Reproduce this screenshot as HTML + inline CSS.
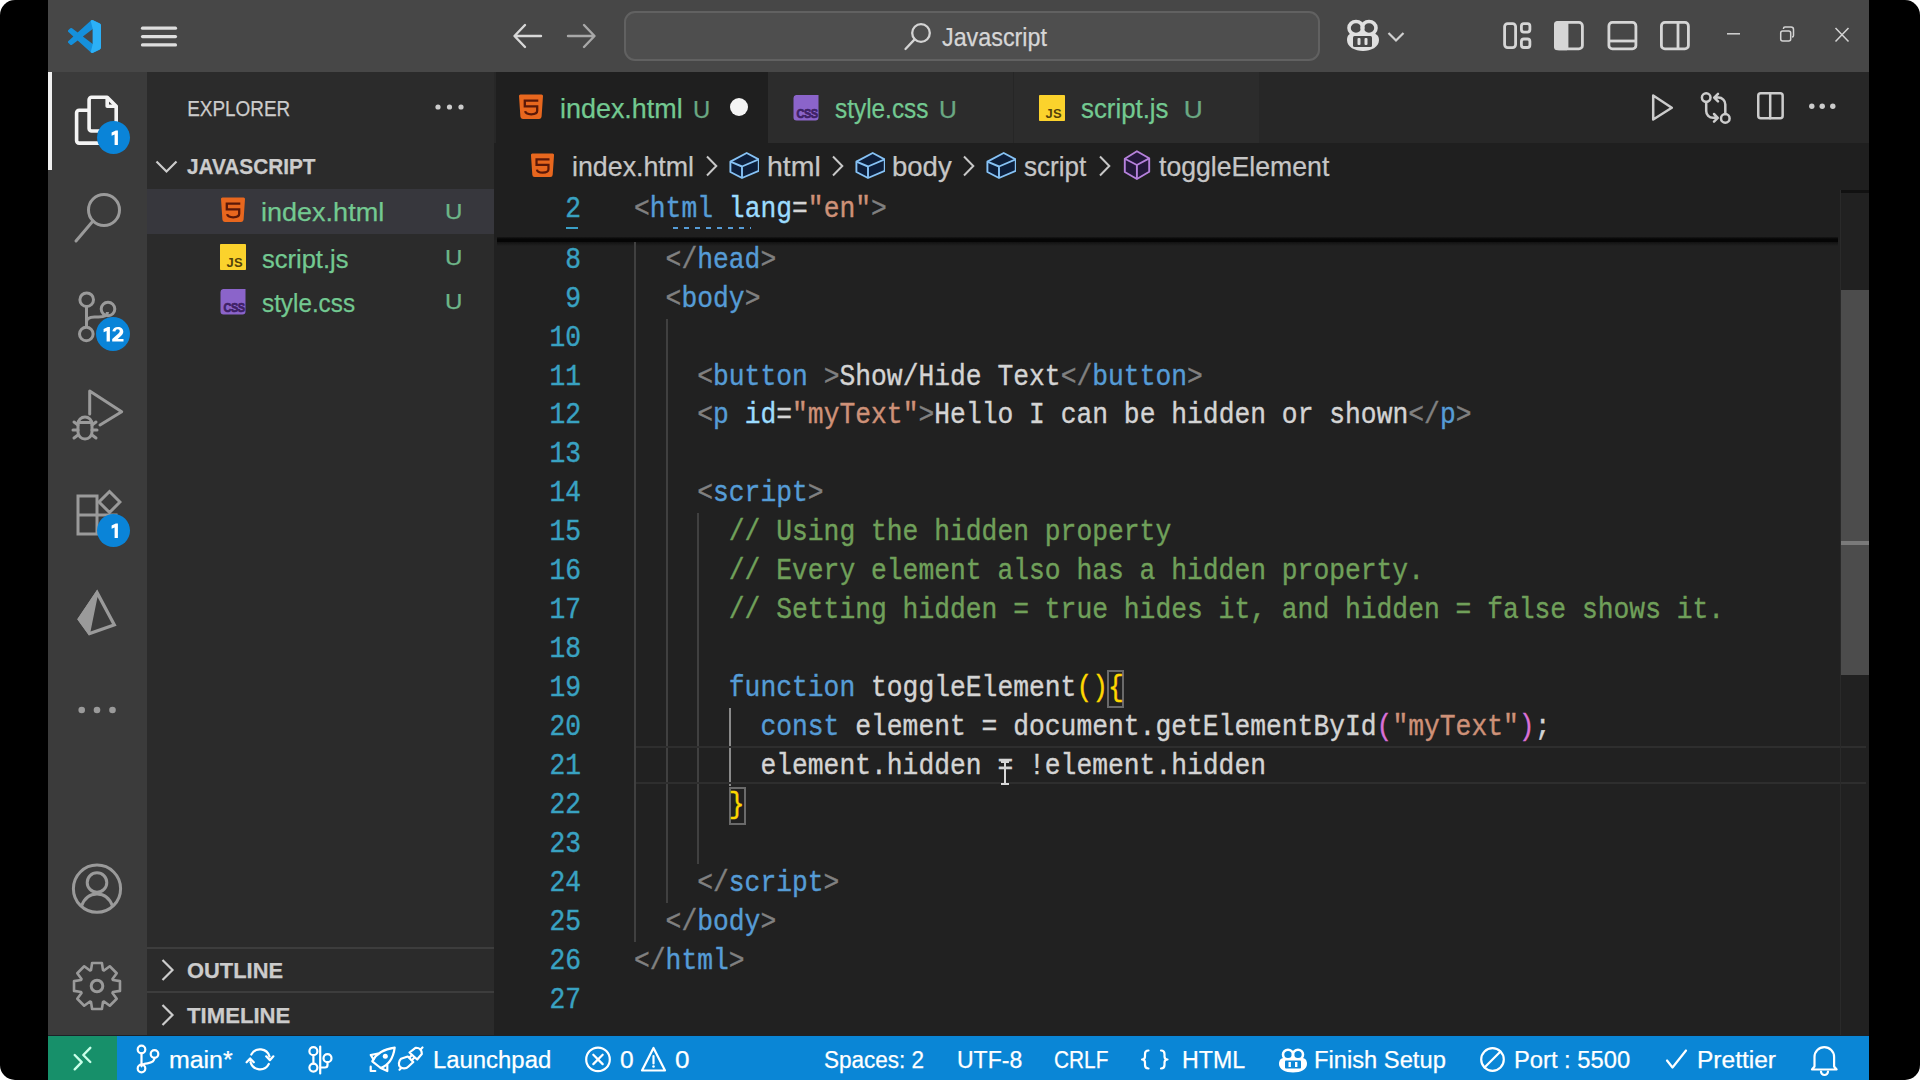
<!DOCTYPE html>
<html><head><meta charset="utf-8">
<style>
*{box-sizing:border-box;margin:0;padding:0}
html,body{width:1920px;height:1080px;overflow:hidden;background:#fff}
body{position:relative;font-family:"Liberation Sans",sans-serif}
.a{position:absolute}
#frame{left:0;top:0;width:1920px;height:1080px;background:#000;border-radius:15px}
#title{left:48px;top:0;width:1821px;height:72px;background:#474747}
#act{left:48px;top:72px;width:99px;height:963px;background:#3b3b3b}
#side{left:147px;top:72px;width:347px;height:963px;background:#2b2b2b}
#editor{left:494px;top:72px;width:1375px;height:963px;background:#212121}
#tabbar{left:494px;top:72px;width:1375px;height:71px;background:#272727}
#status{left:48px;top:1036px;width:1821px;height:44px;background:#0a86d6}
#remote{left:48px;top:1036px;width:69px;height:44px;background:#17906a}
.code{font-family:"Liberation Mono",monospace;font-size:26.33px;white-space:pre;line-height:39px;height:39px;transform:translateY(1.1px) scaleY(1.1);transform-origin:0 26.5px;-webkit-text-stroke:0.35px currentColor}
.ln{left:500px;width:81px;text-align:right;color:#39a2c2}
.cl{left:634px;color:#d4d4d4}
.p{color:#808080}.t{color:#569cd6}.at{color:#9cdcfe}.s{color:#ce9178}.c{color:#70a05a}.k{color:#569cd6}.y{color:#ffd700}.m{color:#da70d6}.f{color:#d4d4d4}
.ui{font-family:"Liberation Sans",sans-serif;white-space:nowrap}
.guide{width:2px;background:#404040}
.tx{font-family:"Liberation Sans",sans-serif;white-space:pre;-webkit-text-stroke:0.25px currentColor}
</style></head><body>

<svg width="0" height="0" style="position:absolute">
<defs>
<symbol id="i-html" viewBox="0 0 26 26"><path fill="#e8671e" d="M2.5 0.5H23.5a1.5 1.5 0 0 1 1.5 1.6L23.6 22.6a2.5 2.5 0 0 1-2.4 2.4H4.8a2.5 2.5 0 0 1-2.4-2.4L1 2.1A1.5 1.5 0 0 1 2.5 0.5z"/><path fill="none" stroke="#5a1808" stroke-width="2.3" stroke-linejoin="miter" d="M20.3 6.6H6.8V12.3H19.2V16.8C19.2 19.3 16.5 20.3 13.2 20.3C10 20.3 7.5 19.5 7.2 17.2"/></symbol>
<symbol id="i-js" viewBox="0 0 26 26"><rect x="0" y="0" width="26" height="26" rx="0.8" fill="#fbd22c"/><text x="23" y="22.6" text-anchor="end" font-family="Liberation Sans" font-weight="bold" font-size="13" letter-spacing="0.3" fill="#54420a">JS</text></symbol>
<symbol id="i-css" viewBox="0 0 26 26"><path fill="#8b64ca" d="M3 0H25.5V22.5a3 3 0 0 1-3 3H3.5a3 3 0 0 1-3-3V3a3 3 0 0 1 2.5-3z"/><text x="14" y="19.3" text-anchor="middle" font-family="Liberation Sans" font-weight="bold" font-size="11" fill="#3e2166" stroke="#3e2166" stroke-width="0.6" transform="scale(1,1.2)" letter-spacing="-0.6">CSS</text></symbol>
<symbol id="i-box" viewBox="0 0 30 28"><path fill="#0d1e3a" stroke="#86c2f5" stroke-width="1.9" stroke-linejoin="round" d="M1.4 9.7L17.7 1L29.75 7.4V18.8L13 26L1.4 20z"/><path fill="none" stroke="#86c2f5" stroke-width="1.9" stroke-linejoin="round" d="M1.4 9.7L13 14.5L29.75 7.4M13 14.5V26"/></symbol>
<symbol id="i-cube" viewBox="0 0 28 30"><path fill="#23183a" stroke="#b681dc" stroke-width="1.9" stroke-linejoin="round" d="M13.9 1.25L26.2 8.3V21.7L13.9 29L1.8 22V8.75z"/><path fill="none" stroke="#b681dc" stroke-width="1.9" stroke-linejoin="round" d="M1.8 8.75L13.9 15L26.2 8.3M13.9 15V29"/></symbol>
<symbol id="i-chev" viewBox="0 0 14 22"><path fill="none" stroke="#c8c8c8" stroke-width="2" d="M2 1.5L11.3 11L2 20.5"/></symbol>
</defs></svg>
<div class="a" id="frame"></div>
<div class="a" id="title"></div>
<div class="a" id="act"></div>
<div class="a" id="side"></div>
<div class="a" id="editor"></div>
<div class="a" id="tabbar"></div>
<div class="a" id="status"></div>
<div class="a" id="remote"></div>
<div class="a" style="left:48px;top:1035px;width:1821px;height:1px;background:#1c2228"></div>


<!-- TITLE BAR -->
<svg class="a" style="left:68px;top:20px" width="33" height="33" viewBox="0 0 100 100">
<defs><linearGradient id="vg" x1="0" y1="0" x2="1" y2="0"><stop offset="0" stop-color="#0f7fcf"/><stop offset="0.7" stop-color="#1a93e2"/><stop offset="1" stop-color="#2aaef5"/></linearGradient></defs>
<path fill="#1590dc" d="M96.46 10.8L75.86.87a6.23 6.230 0 0 0-7.1 1.2L29.35 38.04 12.19 25.01a4.16 4.16 0 0 0-5.32.24L1.36 30.26a4.16 4.16 0 0 0 0 6.16L16.25 50 1.36 63.58a4.16 4.16 0 0 0 0 6.16l5.51 5.01a4.160 4.16 0 0 0 5.32.24l17.16-13.03L68.76 97.93a6.22 6.22 0 0 0 7.1 1.2l20.6-9.92A6.25 6.25 0 0 0 100 83.6V16.4a6.25 6.25 0 0 0-3.54-5.6zM75.01 72.7L45.11 50l29.9-22.7v45.4z"/>
<path fill="#2cb0f7" d="M75.86.87a6.23 6.23 0 0 0-7.1 1.2L75.01 27.3v45.4L68.76 97.93a6.22 6.22 0 0 0 7.1 1.2l20.6-9.92A6.25 6.25 0 0 0 100 83.6V16.4a6.25 6.25 0 0 0-3.54-5.6z"/>
</svg>
<svg class="a" style="left:140px;top:25px" width="38" height="24" viewBox="0 0 38 24"><g stroke="#dedede" stroke-width="3.2" stroke-linecap="round"><line x1="2.5" y1="3.2" x2="35.5" y2="3.2"/><line x1="2.5" y1="11.6" x2="35.5" y2="11.6"/><line x1="2.5" y1="19.9" x2="35.5" y2="19.9"/></g></svg>
<svg class="a" style="left:510px;top:20px" width="90" height="32" viewBox="0 0 90 32"><g fill="none" stroke-width="2.4" stroke-linecap="round" stroke-linejoin="round"><path stroke="#d8d8d8" d="M31 16H5M15 5L4.5 16L15 27"/><path stroke="#a8a8a8" d="M58 16H84M74 5L84.5 16L74 27"/></g></svg>
<div class="a" style="left:624px;top:11px;width:696px;height:50px;border:2px solid #616161;border-radius:11px;background:#4e4e4e"></div>
<svg class="a" style="left:902px;top:21px" width="32" height="32" viewBox="0 0 32 32"><g fill="none" stroke="#d4d4d4" stroke-width="2.3" stroke-linecap="round"><circle cx="19" cy="12" r="8.8"/><line x1="12.6" y1="18.4" x2="3.5" y2="28"/></g></svg>

<svg class="a" style="left:1344px;top:19px" width="38" height="34" viewBox="0 0 38 34"><g fill="none" stroke="#e0e0e0" stroke-width="3.6"><ellipse cx="12" cy="9" rx="7" ry="6.5"/><ellipse cx="25" cy="9" rx="7" ry="6.5"/></g><path fill="#e0e0e0" d="M3 21c0-5 3-7 6-7h19c3 0 7 2 7 7c0 7-8 11-16 11S3 28 3 21z"/><rect x="9" y="17" width="19" height="11" rx="1.5" fill="#474747"/><rect x="13.5" y="19" width="3" height="7" rx="1" fill="#e0e0e0"/><rect x="20.5" y="19" width="3" height="7" rx="1" fill="#e0e0e0"/></svg>
<svg class="a" style="left:1386px;top:30px" width="20" height="14" viewBox="0 0 20 14"><path d="M2.5 3L10 10.5L17.5 3" fill="none" stroke="#d0d0d0" stroke-width="2.2"/></svg>

<svg class="a" style="left:1500px;top:19px" width="200" height="34" viewBox="0 0 200 34">
<g fill="none" stroke="#d6d6d6" stroke-width="2.8">
<rect x="4.6" y="4.6" width="11" height="24" rx="3"/>
<rect x="21.4" y="4.6" width="8.5" height="8.5" rx="2.5"/>
<rect x="21.4" y="20" width="8.5" height="8.5" rx="2.5"/>
<rect x="55.4" y="3.4" width="27" height="26.5" rx="3.5"/>
<rect x="108.9" y="3.4" width="27" height="26.5" rx="3.5"/>
<line x1="108.9" y1="22" x2="135.9" y2="22"/>
<rect x="161.4" y="3.4" width="27" height="26.5" rx="3.5"/>
<line x1="178" y1="3.4" x2="178" y2="29.9"/>
</g>
<path fill="#d6d6d6" d="M57 2h10v29.3H57.5a3.5 3.5 0 0 1-3.5-3.5V5.5A3.5 3.5 0 0 1 57 2z"/>
<line x1="67" y1="3.4" x2="67" y2="29.9" stroke="#d6d6d6" stroke-width="2.8"/>
</svg>

<svg class="a" style="left:1720px;top:20px" width="140" height="30" viewBox="0 0 140 30"><g fill="none" stroke="#d4d4d4" stroke-width="1.5">
<line x1="7" y1="13.8" x2="20" y2="13.8"/>
<rect x="60.7" y="11" width="10" height="10" rx="2"/><path d="M63.5 9V8.5a1.5 1.5 0 0 1 1.5-1.5h6a2.5 2.5 0 0 1 2.5 2.5v6a1.5 1.5 0 0 1-1.5 1.5"/>
<path d="M115.5 8L128.5 21.5M128.5 8L115.5 21.5"/></g></svg>

<!-- ACTIVITY BAR -->
<div class="a" style="left:48px;top:72px;width:4px;height:98px;background:#f0f0f0"></div>
<svg class="a" style="left:72px;top:93px" width="50" height="56" viewBox="0 0 50 56"><g fill="none" stroke="#f4f4f4" stroke-width="3.6" stroke-linejoin="round">
<path d="M19.6 4.3H35.2L44.2 13.3V35.5a2.5 2.5 0 0 1-2.5 2.5H19.6a2.5 2.5 0 0 1-2.5-2.5V6.8a2.5 2.5 0 0 1 2.5-2.5z"/>
<path d="M35.2 4.3V13.3H44.2"/>
<path d="M17.1 17.2H7.1a2.5 2.5 0 0 0-2.5 2.5V47.6a2.5 2.5 0 0 0 2.5 2.5H32"/></g></svg>
<svg class="a" style="left:70px;top:188px" width="56" height="60" viewBox="0 0 56 60"><g fill="none" stroke="#9a9a9a" stroke-width="3"><circle cx="34" cy="22" r="15.5"/><line x1="23" y1="33" x2="6" y2="53" stroke-linecap="round"/></g></svg>
<svg class="a" style="left:72px;top:288px" width="52" height="56" viewBox="0 0 52 56"><g fill="none" stroke="#9a9a9a" stroke-width="3">
<circle cx="14.7" cy="11.7" r="6.8"/><circle cx="36" cy="21" r="6.8"/><circle cx="14.3" cy="46" r="6.8"/>
<line x1="14.5" y1="18.5" x2="14.5" y2="39"/><path d="M14.5 34c0-4 3-5 8-5h4c5 0 9-1 9-5"/></g></svg>
<svg class="a" style="left:68px;top:386px" width="60" height="60" viewBox="0 0 60 60"><g fill="none" stroke="#9a9a9a" stroke-width="3" stroke-linejoin="round" stroke-linecap="round">
<path d="M21.7 28V5L53.7 25.7L32 39"/>
<path d="M10 38a7 7 0 0 1 14 0v8a7 7 0 0 1-14 0z"/><path d="M12 36.5h10M6 36l4 3M28 36l-4 3M5 44h5M24 44h5M6 52l4-3M28 52l-4-3"/></g></svg>
<svg class="a" style="left:72px;top:488px" width="50" height="52" viewBox="0 0 50 52"><g fill="none" stroke="#9a9a9a" stroke-width="3">
<path d="M6 8h19v19H6zM6 27h19v19H6zM25 27h19v19H25z"/><path d="M37.5 3.5L48 14L37.5 24.5L27 14z"/></g></svg>
<svg class="a" style="left:72px;top:584px" width="50" height="56" viewBox="0 0 50 56"><path fill="#9a9a9a" d="M25.3 5.6L5.3 35.3L17 51.4L44.6 41.8z M25.5 13L40 40L18.5 47.5z" fill-rule="evenodd"/><path fill="#9a9a9a" d="M25.3 5.6L5.3 35.3L17 51.4z"/></svg>
<svg class="a" style="left:74px;top:700px" width="48" height="20" viewBox="0 0 48 20"><g fill="#9a9a9a"><circle cx="7.7" cy="10" r="3.3"/><circle cx="23" cy="10" r="3.3"/><circle cx="38.5" cy="10" r="3.3"/></g></svg>
<svg class="a" style="left:70px;top:862px" width="54" height="54" viewBox="0 0 54 54"><g fill="none" stroke="#9a9a9a" stroke-width="3"><circle cx="27" cy="26.7" r="23.6"/><circle cx="27" cy="20.5" r="9.8"/><path d="M11.5 44c3-8 9-12 15.5-12s12.5 4 15.5 12"/></g></svg>
<svg class="a" style="left:70px;top:959px" width="54" height="54" viewBox="0 0 54 54"><path fill="none" stroke="#9a9a9a" stroke-width="2.6" stroke-linejoin="round" d="M21.01 11.09L22.10 4.02L31.90 4.02L32.99 11.09L34.02 11.52L39.79 7.28L46.72 14.21L42.48 19.98L42.91 21.01L49.98 22.10L49.98 31.90L42.91 32.99L42.48 34.02L46.72 39.79L39.79 46.72L34.02 42.48L32.99 42.91L31.90 49.98L22.10 49.98L21.01 42.91L19.98 42.48L14.21 46.72L7.28 39.79L11.52 34.02L11.09 32.99L4.02 31.90L4.02 22.10L11.09 21.01L11.52 19.98L7.28 14.21L14.21 7.28L19.98 11.52z"/><circle cx="27" cy="27" r="5.8" fill="none" stroke="#9a9a9a" stroke-width="3"/></svg>
<!-- badges -->
<div class="a ui" style="left:97px;top:121px;width:33px;height:33px;border-radius:50%;background:#0a84d8;border:0;color:#fff;font-size:19px;font-weight:bold;text-align:center;line-height:33px"><svg width="33" height="33" viewBox="0 0 33 33" style="position:absolute;left:0;top:0"><path fill="#fff" d="M14.6 11.4l4.2-1.9h2.1v14.4h-3.3V13.6l-3 1.2z"/></svg></div>
<div class="a ui" style="left:96px;top:317px;width:34px;height:34px;border-radius:50%;background:#0a84d8;color:#fff;font-size:18px;font-weight:bold;text-align:center;line-height:34px;letter-spacing:-1px"><svg width="34" height="34" viewBox="0 0 34 34" style="position:absolute;left:0;top:0"><path fill="#fff" d="M7.6 11.9l4.2-1.9h2.1v14.4h-3.3V14.1l-3 1.2z"/><path fill="#fff" d="M16.3 14.2c.6-2.6 2.8-4.2 5.6-4.2c3.2 0 5.4 1.9 5.4 4.6c0 2-1 3.4-3.4 5.5l-2.2 1.9h5.8v2.4H16.2v-2.3l4.8-4.3c1.8-1.6 2.7-2.5 2.7-3.6c0-1.2-.8-1.9-2-1.9c-1.3 0-2 .8-2.3 2.1z"/></svg></div>
<div class="a ui" style="left:97px;top:514px;width:33px;height:33px;border-radius:50%;background:#0a84d8;color:#fff;font-size:19px;font-weight:bold;text-align:center;line-height:33px"><svg width="33" height="33" viewBox="0 0 33 33" style="position:absolute;left:0;top:0"><path fill="#fff" d="M14.6 11.4l4.2-1.9h2.1v14.4h-3.3V13.6l-3 1.2z"/></svg></div>


<!-- SIDEBAR -->
<svg class="a" style="left:432px;top:100px" width="36" height="14" viewBox="0 0 36 14"><g fill="#cccccc"><circle cx="6" cy="7" r="2.6"/><circle cx="17.5" cy="7" r="2.6"/><circle cx="29" cy="7" r="2.6"/></g></svg>
<svg class="a" style="left:153px;top:156px" width="28" height="20" viewBox="0 0 28 20"><path d="M3.5 5.5L13.5 15.5L23.5 5.5" fill="none" stroke="#cccccc" stroke-width="2.2"/></svg>
<div class="a" style="left:147px;top:189px;width:347px;height:45px;background:#37373d"></div>
<div class="a" style="left:147px;top:947px;width:347px;height:2px;background:#3d3d3d"></div>
<div class="a" style="left:147px;top:991px;width:347px;height:2px;background:#3d3d3d"></div>
<svg class="a" style="left:156px;top:956px" width="24" height="28" viewBox="0 0 24 28"><path d="M6.5 4L16.5 14L6.5 24" fill="none" stroke="#cccccc" stroke-width="2.2"/></svg>
<svg class="a" style="left:156px;top:1001px" width="24" height="28" viewBox="0 0 24 28"><path d="M6.5 4L16.5 14L6.5 24" fill="none" stroke="#cccccc" stroke-width="2.2"/></svg>

<!-- TABS -->
<div class="a" style="left:496px;top:72px;width:272px;height:71px;background:#1f1f1f"></div>
<div class="a" style="left:768px;top:72px;width:245px;height:71px;background:#2c2c2c"></div>
<div class="a" style="left:1014px;top:72px;width:245px;height:71px;background:#2c2c2c"></div>
<div class="a" style="left:1013px;top:72px;width:1px;height:71px;background:#262626"></div>
<div class="a" style="left:730px;top:98px;width:18px;height:18px;border-radius:50%;background:#f4f4f4"></div>
<div class="a" style="left:494px;top:143px;width:1375px;height:47px;background:#1f1f1f"></div>

<!-- EDITOR ACTIONS -->
<svg class="a" style="left:1645px;top:88px" width="200" height="40" viewBox="0 0 200 40"><g fill="none" stroke="#cccccc" stroke-width="2.5" stroke-linejoin="round" stroke-linecap="round">
<path d="M8.2 7.5L26.8 19.8L8.2 31.5z"/>
<circle cx="61.2" cy="9.6" r="4.3"/><circle cx="80.3" cy="30.4" r="4.3"/>
<path d="M61.2 14V23a6.8 6.8 0 0 0 6.8 6.8H72.5M69 26L72.8 29.8L69 33.6"/>
<path d="M80.3 26V16.4a6.8 6.8 0 0 0-6.8-6.8H69.5M73 5.8L69.2 9.6L73 13.4"/>
<rect x="13.25" y="5.35" width="24.4" height="24.9" rx="2.5" transform="translate(100,0)"/><line x1="125.2" y1="5.35" x2="125.2" y2="30.25"/>
</g><g fill="#cccccc"><circle cx="166.8" cy="18.3" r="2.7"/><circle cx="177.2" cy="18.3" r="2.7"/><circle cx="187.8" cy="18.3" r="2.7"/></g></svg>


<!-- FILE ICONS -->
<svg class="a" style="left:220px;top:197px" width="26" height="26"><use href="#i-html"/></svg>
<svg class="a" style="left:220px;top:243.5px" width="26" height="26"><use href="#i-js"/></svg>
<svg class="a" style="left:220px;top:289px" width="26" height="26"><use href="#i-css"/></svg>
<svg class="a" style="left:518px;top:94px" width="26" height="26"><use href="#i-html"/></svg>
<svg class="a" style="left:793px;top:94.5px" width="26" height="26"><use href="#i-css"/></svg>
<svg class="a" style="left:1039px;top:94.5px" width="26" height="26"><use href="#i-js"/></svg>
<svg class="a" style="left:530px;top:153px" width="25" height="25"><use href="#i-html"/></svg>
<!-- BREADCRUMB ICONS -->
<svg class="a" style="left:705px;top:155px" width="14" height="22"><use href="#i-chev"/></svg>
<svg class="a" style="left:830.5px;top:155px" width="14" height="22"><use href="#i-chev"/></svg>
<svg class="a" style="left:962px;top:155px" width="14" height="22"><use href="#i-chev"/></svg>
<svg class="a" style="left:1097.5px;top:155px" width="14" height="22"><use href="#i-chev"/></svg>
<svg class="a" style="left:729px;top:152px" width="30" height="28"><use href="#i-box"/></svg>
<svg class="a" style="left:854.6px;top:152px" width="30" height="28"><use href="#i-box"/></svg>
<svg class="a" style="left:985.6px;top:152px" width="30" height="28"><use href="#i-box"/></svg>
<svg class="a" style="left:1123px;top:150px" width="28" height="30"><use href="#i-cube"/></svg>

<!-- STICKY SCROLL -->
<div class="a" style="left:494px;top:190px;width:1346px;height:50px;background:#1f1f1f"></div>
<div class="a ln code" style="top:190px">2</div>
<div class="a cl code" style="top:190px"><span class="p">&lt;</span><span class="t">html</span> <span class="at">lang</span>=<span class="s">"en"</span><span class="p">&gt;</span></div>
<div class="a" style="left:566px;top:226.5px;width:12px;height:2px;background:#3b9fc6"></div>
<div class="a" style="left:673px;top:227px;width:78px;height:2px;background:repeating-linear-gradient(90deg,#569cd6 0 5px,transparent 5px 11px)"></div>
<div class="a" style="left:497px;top:237px;width:1341px;height:2px;background:linear-gradient(rgba(5,5,5,0.3),#050505)"></div><div class="a" style="left:497px;top:239px;width:1341px;height:3px;background:#050505"></div><div class="a" style="left:497px;top:242px;width:1341px;height:4px;background:linear-gradient(#121212,rgba(33,33,33,0))"></div>

<!-- GUIDES -->
<div class="a guide" style="left:634px;top:242px;height:700px"></div>
<div class="a guide" style="left:665.5px;top:318.5px;height:584px"></div>
<div class="a guide" style="left:697px;top:513.3px;height:350.5px"></div>
<div class="a guide" style="left:729px;top:708px;height:78px;background:#8a8a8a"></div>
<!-- current line -->
<div class="a" style="left:636px;top:746px;width:1230px;height:38px;border-top:2px solid #2e2e2e;border-bottom:2px solid #2e2e2e"></div>
<!-- bracket boxes -->
<div class="a" style="left:1107px;top:670px;width:17px;height:38px;border:2px solid #6a6a6a"></div>
<div class="a" style="left:729px;top:787px;width:17px;height:38px;border:2px solid #6a6a6a"></div>
<!-- I-beam -->
<svg class="a" style="left:998px;top:760px" width="14" height="28" viewBox="0 0 14 28"><path fill="none" stroke="#d8d8d8" stroke-width="2" d="M3 2h8M7 2v22M3 24h8"/></svg>

<!-- SCROLLBAR -->
<div class="a" style="left:1840px;top:190px;width:1px;height:845px;background:#2a2a2a"></div>
<div class="a" style="left:1841px;top:190px;width:28px;height:3px;background:#111"></div>
<div class="a" style="left:1841px;top:290px;width:28px;height:385px;background:#4c4c4c"></div>
<div class="a" style="left:1841px;top:541px;width:28px;height:4px;background:#7a7a7a"></div>


<!-- STATUS ICONS -->
<svg class="a" style="left:48px;top:1035px" width="1821" height="45" viewBox="0 0 1821 45">
<g fill="none" stroke="#c9ffe9" stroke-width="2.4" stroke-linecap="round" stroke-linejoin="round">
<path d="M26.7 20L33.7 27.2L26.7 34.3M42.3 12.8L35.3 20L42.3 27"/>
</g>
<g fill="none" stroke="#ffffff" stroke-width="2.2" stroke-linecap="round" stroke-linejoin="round">
<!-- branch -->
<circle cx="93.5" cy="14.5" r="3.8"/><circle cx="93.5" cy="33.5" r="3.8"/><circle cx="106.5" cy="19" r="3.8"/>
<path d="M93.5 18.3V29.7M106.5 22.8c0 4-3 5-7 5.5c-3 .4-6 1-6 3"/>
<!-- sync -->
<path d="M203.3 19.5A9.9 9.9 0 0 1 221.5 21.5M218.2 21.3L221.9 25.2L225.4 21.3"/>
<path d="M220.8 29A9.9 9.9 0 0 1 202.5 27.2M198.6 27.3L202.1 23.4L205.8 27.3"/>
<!-- compare -->
<circle cx="265.4" cy="16.2" r="4"/><circle cx="265.4" cy="32.6" r="4"/><circle cx="279.5" cy="23.2" r="4"/>
<path d="M265.4 20.2V28.6M272.2 11.5V38.5M279.5 27.2V30a2.5 2.5 0 0 1-2.5 2.5H272.2"/>
<!-- rocket -->
<path d="M324.3 26.3Q330 15 346.7 12.7Q344.5 29 332.7 33Z"/>
<path d="M325.5 24.5L322.7 20L330 18.7"/><path d="M332.7 33L339.3 36V30"/><path d="M322.7 31.7V36H327.3"/>
<!-- plug -->
<path d="M361.5 17.5L367.5 12.8C371.5 12.5 374 15 373.8 19L369.2 24.5Z"/><path d="M372.5 14.5L374.5 12.5"/>
<path d="M359.8 21.5L365.3 27L360.5 31.5C358 34 354.2 34 352.2 32C350.2 30 350.5 26.2 353 23.8Z"/><path d="M361.5 22.5L363.8 20.2M363.8 25.2L366.2 22.8M351.5 34.8L353.3 33"/>
<!-- error -->
<circle cx="550" cy="24.4" r="11.8"/><path d="M545.3 19.7l9.4 9.4M554.7 19.7l-9.4 9.4"/>
<!-- warning -->
<path d="M605.5 13L617 35.5H594z"/><path d="M605.5 21v7.5"/>
<!-- braces -->
<path d="M1100.5 15.5c-3 0-3.5 1.5-3.5 3.5v2.5c0 2-1 3-3 3c2 0 3 1 3 3v2.5c0 2 .5 3.5 3.5 3.5M1113 15.5c3 0 3.5 1.5 3.5 3.5v2.5c0 2 1 3 3 3c-2 0-3 1-3 3v2.5c0 2-.5 3.5-3.5 3.5"/>
<!-- port -->
<circle cx="1444.5" cy="24.5" r="11.3"/><path d="M1436.5 32.5l16-16"/>
<!-- check -->
<path d="M1619 25.5l5.5 7l13.5-17"/>
<!-- bell -->
<path d="M1766.5 31.5V22a9.8 9.8 0 0 1 19.6 0v9.5l2.5 3H1764z"/><path d="M1773 36.5a3.5 3.5 0 0 0 7 0"/>
</g>
<g fill="#ffffff"><circle cx="605.5" cy="31.5" r="1.3"/><circle cx="337.3" cy="21.3" r="2.5"/></g>
<!-- copilot small -->
<g transform="translate(1230,13)"><g fill="none" stroke="#fff" stroke-width="2.6"><ellipse cx="10" cy="6.5" rx="5" ry="4.8"/><ellipse cx="20" cy="6.5" rx="5" ry="4.8"/></g><path fill="#fff" d="M1 16c0-4 2-6 5-6h18c3 0 5 2 5 6c0 5-6 8.5-14 8.5S1 21 1 16z"/><rect x="7" y="12.5" width="16" height="8" rx="1" fill="#0b86d7"/><rect x="10.5" y="14" width="2.4" height="5" fill="#fff"/><rect x="17" y="14" width="2.4" height="5" fill="#fff"/></g>
</svg>

<!-- CODE -->
<div id="codewrap">
<div class="a ln code" style="top:240.65px">8</div>
<div class="a ln code" style="top:279.6px">9</div>
<div class="a ln code" style="top:318.55px">10</div>
<div class="a ln code" style="top:357.5px">11</div>
<div class="a ln code" style="top:396.45px">12</div>
<div class="a ln code" style="top:435.4px">13</div>
<div class="a ln code" style="top:474.35px">14</div>
<div class="a ln code" style="top:513.3px">15</div>
<div class="a ln code" style="top:552.25px">16</div>
<div class="a ln code" style="top:591.2px">17</div>
<div class="a ln code" style="top:630.15px">18</div>
<div class="a ln code" style="top:669.1px">19</div>
<div class="a ln code" style="top:708.05px">20</div>
<div class="a ln code" style="top:747px">21</div>
<div class="a ln code" style="top:785.95px">22</div>
<div class="a ln code" style="top:824.9px">23</div>
<div class="a ln code" style="top:863.85px">24</div>
<div class="a ln code" style="top:902.8px">25</div>
<div class="a ln code" style="top:941.75px">26</div>
<div class="a ln code" style="top:980.7px">27</div>

<div class="a cl code" style="top:240.65px">  <span class="p">&lt;/</span><span class="t">head</span><span class="p">&gt;</span></div>
<div class="a cl code" style="top:279.6px">  <span class="p">&lt;</span><span class="t">body</span><span class="p">&gt;</span></div>
<div class="a cl code" style="top:357.5px">    <span class="p">&lt;</span><span class="t">button</span> <span class="p">&gt;</span>Show/Hide Text<span class="p">&lt;/</span><span class="t">button</span><span class="p">&gt;</span></div>
<div class="a cl code" style="top:396.45px">    <span class="p">&lt;</span><span class="t">p</span> <span class="at">id</span>=<span class="s">"myText"</span><span class="p">&gt;</span>Hello I can be hidden or shown<span class="p">&lt;/</span><span class="t">p</span><span class="p">&gt;</span></div>
<div class="a cl code" style="top:474.35px">    <span class="p">&lt;</span><span class="t">script</span><span class="p">&gt;</span></div>
<div class="a cl code" style="top:513.3px">      <span class="c">// Using the hidden property</span></div>
<div class="a cl code" style="top:552.25px">      <span class="c">// Every element also has a hidden property.</span></div>
<div class="a cl code" style="top:591.2px">      <span class="c">// Setting hidden = true hides it, and hidden = false shows it.</span></div>
<div class="a cl code" style="top:669.1px">      <span class="k">function</span> toggleElement<span class="y">(){</span></div>
<div class="a cl code" style="top:708.05px">        <span class="k">const</span> element = document.getElementById<span class="m">(</span><span class="s">"myText"</span><span class="m">)</span>;</div>
<div class="a cl code" style="top:747px">        element.hidden = !element.hidden</div>
<div class="a cl code" style="top:785.95px">      <span class="y">}</span></div>
<div class="a cl code" style="top:863.85px">    <span class="p">&lt;/</span><span class="t">script</span><span class="p">&gt;</span></div>
<div class="a cl code" style="top:902.8px">  <span class="p">&lt;/</span><span class="t">body</span><span class="p">&gt;</span></div>
<div class="a cl code" style="top:941.75px"><span class="p">&lt;/</span><span class="t">html</span><span class="p">&gt;</span></div>
</div>

<div class="a tx" style="left:186.50px;top:98.38px;font-size:22px;line-height:22px;color:#cccccc;font-weight:normal;transform:scaleX(0.8607);transform-origin:1.00px 0;">EXPLORER</div>
<div class="a tx" style="left:187.00px;top:156.38px;font-size:22px;line-height:22px;color:#cccccc;font-weight:bold;transform:scaleX(0.9440);transform-origin:0.00px 0;">JAVASCRIPT</div>
<div class="a tx" style="left:260.60px;top:198.99px;font-size:26px;line-height:26px;color:#73c991;font-weight:normal;transform:scaleX(1.0401);transform-origin:1.00px 0;">index.html</div>
<div class="a tx" style="left:444.60px;top:200.95px;font-size:22.5px;line-height:22.5px;color:#6db488;font-weight:normal;transform:scaleX(1.0714);transform-origin:1.00px 0;">U</div>
<div class="a tx" style="left:262.00px;top:245.59px;font-size:26px;line-height:26px;color:#73c991;font-weight:normal;transform:scaleX(0.9805);transform-origin:0.00px 0;">script.js</div>
<div class="a tx" style="left:444.60px;top:247.45px;font-size:22.5px;line-height:22.5px;color:#6db488;font-weight:normal;transform:scaleX(1.0714);transform-origin:1.00px 0;">U</div>
<div class="a tx" style="left:262.00px;top:289.59px;font-size:26px;line-height:26px;color:#73c991;font-weight:normal;transform:scaleX(0.9330);transform-origin:0.00px 0;">style.css</div>
<div class="a tx" style="left:444.60px;top:291.45px;font-size:22.5px;line-height:22.5px;color:#6db488;font-weight:normal;transform:scaleX(1.0714);transform-origin:1.00px 0;">U</div>
<div class="a tx" style="left:187.30px;top:959.68px;font-size:22px;line-height:22px;color:#cccccc;font-weight:bold;transform:scaleX(0.9950);transform-origin:0.00px 0;">OUTLINE</div>
<div class="a tx" style="left:187.30px;top:1004.68px;font-size:22px;line-height:22px;color:#cccccc;font-weight:bold;transform:scaleX(1.0070);transform-origin:0.00px 0;">TIMELINE</div>
<div class="a tx" style="left:942.00px;top:24.84px;font-size:25px;line-height:25px;color:#d6d6d6;font-weight:normal;transform:scaleX(0.9326);transform-origin:0.00px 0;">Javascript</div>
<div class="a tx" style="left:560.00px;top:95.84px;font-size:27px;line-height:27px;color:#73c991;font-weight:normal;transform:scaleX(0.9970);transform-origin:1.00px 0;">index.html</div>
<div class="a tx" style="left:692.80px;top:99.23px;font-size:23px;line-height:23px;color:#6aa883;font-weight:normal;transform:scaleX(1.0357);transform-origin:1.00px 0;">U</div>
<div class="a tx" style="left:835.00px;top:95.84px;font-size:27px;line-height:27px;color:#73c991;font-weight:normal;transform:scaleX(0.9028);transform-origin:0.00px 0;">style.css</div>
<div class="a tx" style="left:939.00px;top:99.23px;font-size:23px;line-height:23px;color:#6aa883;font-weight:normal;transform:scaleX(1.0714);transform-origin:1.00px 0;">U</div>
<div class="a tx" style="left:1080.70px;top:95.84px;font-size:27px;line-height:27px;color:#73c991;font-weight:normal;transform:scaleX(0.9560);transform-origin:0.00px 0;">script.js</div>
<div class="a tx" style="left:1184.00px;top:99.23px;font-size:23px;line-height:23px;color:#6aa883;font-weight:normal;transform:scaleX(1.1429);transform-origin:1.00px 0;">U</div>
<div class="a tx" style="left:572.00px;top:152.81px;font-size:27.4px;line-height:27.4px;color:#c6c6c6;font-weight:normal;transform:scaleX(0.9776);transform-origin:1.00px 0;">index.html</div>
<div class="a tx" style="left:766.70px;top:152.81px;font-size:27.4px;line-height:27.4px;color:#c6c6c6;font-weight:normal;transform:scaleX(1.0391);transform-origin:1.00px 0;">html</div>
<div class="a tx" style="left:891.70px;top:152.81px;font-size:27.4px;line-height:27.4px;color:#c6c6c6;font-weight:normal;transform:scaleX(1.0051);transform-origin:1.00px 0;">body</div>
<div class="a tx" style="left:1024.00px;top:152.81px;font-size:27.4px;line-height:27.4px;color:#c6c6c6;font-weight:normal;transform:scaleX(0.9524);transform-origin:0.00px 0;">script</div>
<div class="a tx" style="left:1159.30px;top:152.81px;font-size:27.4px;line-height:27.4px;color:#c6c6c6;font-weight:normal;transform:scaleX(0.9726);transform-origin:0.00px 0;">toggleElement</div>
<div class="a tx" style="left:169.00px;top:1048.83px;font-size:23px;line-height:23px;color:#ffffff;font-weight:normal;transform:scaleX(1.0838);transform-origin:1.00px 0;">main*</div>
<div class="a tx" style="left:433.00px;top:1048.83px;font-size:23px;line-height:23px;color:#ffffff;font-weight:normal;transform:scaleX(1.0389);transform-origin:1.00px 0;">Launchpad</div>
<div class="a tx" style="left:620.00px;top:1048.83px;font-size:23px;line-height:23px;color:#ffffff;font-weight:normal;transform:scaleX(1.0667);transform-origin:0.00px 0;">0</div>
<div class="a tx" style="left:674.70px;top:1048.83px;font-size:23px;line-height:23px;color:#ffffff;font-weight:normal;transform:scaleX(1.1333);transform-origin:0.00px 0;">0</div>
<div class="a tx" style="left:824.00px;top:1048.83px;font-size:23px;line-height:23px;color:#ffffff;font-weight:normal;transform:scaleX(0.9782);transform-origin:1.00px 0;">Spaces: 2</div>
<div class="a tx" style="left:957.30px;top:1048.83px;font-size:23px;line-height:23px;color:#ffffff;font-weight:normal;transform:scaleX(1.0005);transform-origin:1.00px 0;">UTF-8</div>
<div class="a tx" style="left:1054.00px;top:1048.83px;font-size:23px;line-height:23px;color:#ffffff;font-weight:normal;transform:scaleX(0.9032);transform-origin:1.00px 0;">CRLF</div>
<div class="a tx" style="left:1181.70px;top:1048.83px;font-size:23px;line-height:23px;color:#ffffff;font-weight:normal;transform:scaleX(1.0078);transform-origin:1.00px 0;">HTML</div>
<div class="a tx" style="left:1314.00px;top:1048.83px;font-size:23px;line-height:23px;color:#ffffff;font-weight:normal;transform:scaleX(1.0313);transform-origin:1.00px 0;">Finish Setup</div>
<div class="a tx" style="left:1514.00px;top:1048.83px;font-size:23px;line-height:23px;color:#ffffff;font-weight:normal;transform:scaleX(1.0323);transform-origin:1.00px 0;">Port : 5500</div>
<div class="a tx" style="left:1697.30px;top:1048.83px;font-size:23px;line-height:23px;color:#ffffff;font-weight:normal;transform:scaleX(1.0671);transform-origin:1.00px 0;">Prettier</div>
</body></html>
